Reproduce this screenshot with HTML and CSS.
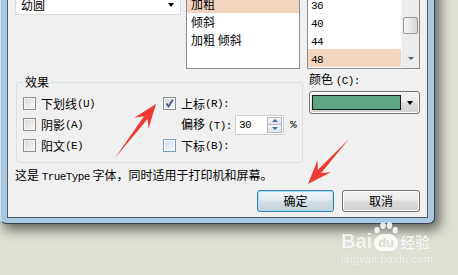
FILE: index.html
```html
<!DOCTYPE html>
<html lang="zh-CN">
<head>
<meta charset="utf-8">
<title>字体</title>
<link rel="stylesheet" href="styles.css">
</head>
<body>
<div class="window">
  <div class="client">
    <div class="top-row">
      <div class="font-col">
        <div class="combo">
          <span class="combo-text">幼圆</span>
          <span class="tri"></span>
        </div>
      </div>
      <ul class="listbox style-list">
        <li>常规</li>
        <li class="sel">加粗</li>
        <li>倾斜</li>
        <li>加粗 倾斜</li>
      </ul>
      <div class="listbox size-list">
        <ul class="size-items">
          <li><span class="mono">32</span></li>
          <li><span class="mono">36</span></li>
          <li><span class="mono">40</span></li>
          <li><span class="mono">44</span></li>
          <li class="sel"><span class="mono">48</span></li>
        </ul>
        <div class="scrollbar">
          <span class="thumb"></span>
          <span class="sb-down"></span>
        </div>
      </div>
    </div>

    <div class="mid-row">
      <fieldset class="effects">
        <legend>效果</legend>
        <div class="effects-grid">
          <label class="chk"><span class="box"></span>下划线<span class="mono">(U)</span></label>
          <label class="chk"><span class="box"><svg viewBox="0 0 11 11" width="11" height="11"><path d="M2.5 5.5 L4.5 8.5 L8.8 1.8" fill="none" stroke="#3d4f8f" stroke-width="1.7"/></svg></span>上标 <span class="mono">(R):</span></label>
          <label class="chk"><span class="box"></span>阴影<span class="mono">(A)</span></label>
          <div class="offset">
            <span class="offset-label">偏移 <span class="mono">(T):</span></span>
            <div class="spin">
              <span class="mono spin-val">30</span>
              <span class="spin-btns">
                <span class="spin-btn"><span class="up"></span></span>
                <span class="spin-btn"><span class="down"></span></span>
              </span>
            </div>
            <span class="mono pct">%</span>
          </div>
          <label class="chk"><span class="box"></span>阳文<span class="mono">(E)</span></label>
          <label class="chk"><span class="box hot"></span>下标 <span class="mono">(B):</span></label>
        </div>
      </fieldset>
      <div class="color-col">
        <div class="color-label">颜色 <span class="mono">(C):</span></div>
        <div class="color-combo">
          <span class="swatch"></span>
          <span class="tri"></span>
        </div>
      </div>
    </div>

    <p class="desc">这是 <span class="mono">TrueType</span> 字体，同时适用于打印机和屏幕。</p>

    <div class="buttons">
      <button class="btn default">确定</button>
      <button class="btn cancel">取消</button>
    </div>
  </div>
</div>

<svg class="arrows" width="458" height="275" viewBox="0 0 458 275">
  <polygon points="156,104 148.6,128.6 147.5,118.9 115,158 144,116.2 134.3,117.7" fill="#ef3a33"/>
  <polygon points="308,184 330.8,172.3 321.1,172.9 349,139 317.8,170 317.5,160.2" fill="#ef3a33"/>
</svg>

<div class="watermark">
  <div class="wm-top">
    <span class="wm-bai">Bai</span>
    <span class="wm-paw">
      <svg class="toes" width="26" height="12" viewBox="0 0 26 12">
        <ellipse cx="4" cy="8" rx="2.6" ry="3.2"/>
        <ellipse cx="10" cy="3.6" rx="2.8" ry="3.4"/>
        <ellipse cx="16.5" cy="3.6" rx="2.8" ry="3.4"/>
        <ellipse cx="22.2" cy="8" rx="2.6" ry="3.2"/>
      </svg>
      <span class="wm-du">du</span>
    </span>
    <span class="wm-jy">经验</span>
  </div>
  <div class="wm-url">jingyan.baidu.com</div>
</div>
</body>
</html>
```
FILE: styles.css
```css
* { box-sizing: border-box; }
html, body { margin: 0; padding: 0; }
body {
  width: 458px;
  height: 275px;
  overflow: hidden;
  position: relative;
  background: #dfe0d4;
  font: 12px/16px "Noto Sans CJK SC", "Liberation Sans", sans-serif;
  color: #000;
}
.mono {
  font-family: "Liberation Mono", monospace;
  font-size: 11px;
  letter-spacing: -0.6px;
}

/* window frame */
.window {
  width: 435px;
  margin-top: -30px;
  background: #a9c8e2;
  padding: 0 6px 5px 6px;
  border: 1px solid #39444f;
  border-left-color: #d4e2ee;
  border-top: 0;
  border-radius: 0 0 6px 6px;
  box-shadow: 4px 5px 12px 1px rgba(0, 0, 0, 0.55);
}
.client {
  height: 248px;
  background: #f0f0f0;
  border: 1px solid #4c5a68;
  border-top: 0;
  padding: 6px 7px 7px 7px;
  display: flex;
  flex-direction: column;
}

/* top row */
.top-row {
  display: flex;
  height: 93px;
}
.font-col { width: 166px; margin-right: 5px; }
.combo {
  margin-top: 16px;
  height: 23px;
  background: #fff;
  border: 1px solid #d7dce2;
  display: flex;
  align-items: center;
  padding: 3px 6px 0 5px;
}
.combo-text { flex: 1; }
.tri {
  width: 0; height: 0;
  border-left: 3.5px solid transparent;
  border-right: 3.5px solid transparent;
  border-top: 4px solid #000;
}
.listbox {
  margin: 0;
  padding: 0;
  list-style: none;
  background: #fff;
  border: 1px solid #8a8c8f;
  height: 93px;
}
.listbox li { height: 18px; line-height: 18px; }
.style-list { width: 114px; margin-right: 7px; }
.style-list li { padding-left: 4px; }
.sel { background: #f3d4be; }
.size-list { width: 113px; display: flex; }
.size-items { flex: 1; margin: 0; padding: 0; list-style: none; }
.size-items li { padding-left: 3px; }
.scrollbar {
  width: 18px;
  background: #ececec;
  border-left: 1px solid #f4f4f4;
  display: flex;
  flex-direction: column;
  align-items: center;
}
.thumb {
  margin-top: 40px;
  width: 15px;
  height: 17px;
  border: 1px solid #979797;
  border-radius: 2px;
  background: linear-gradient(to right, #f6f6f6, #e4e4e4 55%, #d6d6d6);
}
.sb-down {
  margin-top: auto;
  margin-bottom: 8px;
  width: 0; height: 0;
  border-left: 3px solid transparent;
  border-right: 3px solid transparent;
  border-top: 3px solid #5e5e5e;
}

/* middle row */
.mid-row {
  display: flex;
  margin-top: 6px;
}
.effects {
  margin: 0 0 0 1px;
  width: 287px;
  min-width: 0;
  padding: 4px 6px 6px 6px;
  border: 1px solid #d5dfe5;
  border-radius: 3px;
}
.effects legend {
  padding: 0 2px;
  line-height: 14px;
}
.effects-grid {
  display: grid;
  grid-template-columns: 140px 1fr;
  grid-auto-rows: 21px;
  align-items: center;
}
.chk { display: flex; align-items: center; }
.box {
  width: 13px;
  height: 13px;
  margin-right: 5px;
  border: 1px solid #8e8f8f;
  background: linear-gradient(135deg, #d6d6d6, #f4f4f4 80%);
  box-shadow: inset 0 0 0 1px #f4f4f4;
  display: flex;
  align-items: center;
  justify-content: center;
}
.box.hot {
  border-color: #7b9ebd;
  background: linear-gradient(135deg, #c9dbec, #eef4fa 80%);
  box-shadow: inset 0 0 0 1px #f4f8fc;
}
.offset {
  display: flex;
  align-items: center;
  padding-left: 18px;
}
.offset-label { width: 54px; }
.spin {
  width: 49px;
  height: 20px;
  background: #fff;
  border: 1px solid #cfcfcf;
  display: flex;
  align-items: center;
  padding: 0 1px 0 3px;
}
.spin-val { flex: 1; }
.spin-btns {
  width: 15px;
  height: 16px;
  display: flex;
  flex-direction: column;
}
.spin-btn {
  flex: 1;
  border: 1px solid #b7b7b7;
  background: linear-gradient(#f3f6fa, #dde4ee);
  display: flex;
  align-items: center;
  justify-content: center;
}
.spin-btn + .spin-btn { border-top: 0; }
.up, .down {
  width: 0; height: 0;
  border-left: 3px solid transparent;
  border-right: 3px solid transparent;
}
.up { border-bottom: 3px solid #4b68a8; }
.down { border-top: 3px solid #4b68a8; }
.pct { margin-left: 6px; }

.color-col {
  width: 111px;
  margin-left: 6px;
  margin-top: -3px;
}
.color-label { line-height: 14px; }
.color-combo {
  margin-top: 3px;
  height: 23px;
  border: 1px solid #737373;
  border-radius: 3px;
  background: linear-gradient(#f3f3f3, #ebebeb 48%, #dedede 52%, #d2d2d2);
  box-shadow: inset 0 0 0 1px #fafafa;
  display: flex;
  align-items: center;
  padding-left: 2px;
}
.swatch {
  width: 89px;
  height: 15px;
  border: 1px solid #1b1b1b;
  background: #5fa685;
  margin-right: 6px;
}

/* bottom */
.desc {
  margin: 4px 0 0 0;
  line-height: 16px;
}
.buttons {
  display: flex;
  justify-content: flex-end;
  gap: 8px;
  margin-top: 5px;
}
.btn {
  height: 22px;
  padding: 0;
  font: 12px/16px "Noto Sans CJK SC", sans-serif;
  color: #000;
  border: 1px solid #707070;
  border-radius: 3px;
  background: linear-gradient(#f2f2f2, #ebebeb 45%, #dddddd 50%, #cfcfcf);
  box-shadow: inset 0 0 0 1px #fbfbfb;
}
.btn.default {
  width: 77px;
  border-color: #3c7fb1;
  box-shadow: inset 0 0 0 1px #9ee0f8;
  background: linear-gradient(#eef4f8, #e5ecf1 45%, #d5dee4 50%, #c8d2d9);
}
.btn.cancel { width: 78px; }

/* overlays */
.arrows {
  position: absolute;
  left: 0;
  top: 0;
  pointer-events: none;
}
.watermark {
  position: absolute;
  left: 341px;
  top: 221px;
  color: rgba(255, 255, 255, 0.85);
  text-shadow: 0 0 1px rgba(0, 0, 0, 0.15);
  font-family: "Liberation Sans", sans-serif;
}
.wm-top { display: flex; align-items: flex-end; height: 30px; }
.wm-bai { font-size: 20px; font-weight: bold; line-height: 20px; }
.wm-paw {
  display: flex;
  flex-direction: column;
  align-items: center;
  width: 26px;
  margin: 0 1px;
}
.toes { fill: rgba(255, 255, 255, 0.85); }
.wm-du {
  width: 24px;
  height: 17px;
  border-radius: 10px 10px 8px 8px;
  background: rgba(255, 255, 255, 0.85);
  color: #d9dace;
  font-size: 13px;
  font-weight: bold;
  line-height: 17px;
  text-align: center;
  text-shadow: none;
}
.wm-jy {
  font-family: "Noto Sans CJK SC", sans-serif;
  font-size: 15px;
  font-weight: bold;
  line-height: 19px;
}
.wm-url {
  font-size: 11px;
  line-height: 12px;
  margin-top: 2px;
  letter-spacing: 0.2px;
}
```
